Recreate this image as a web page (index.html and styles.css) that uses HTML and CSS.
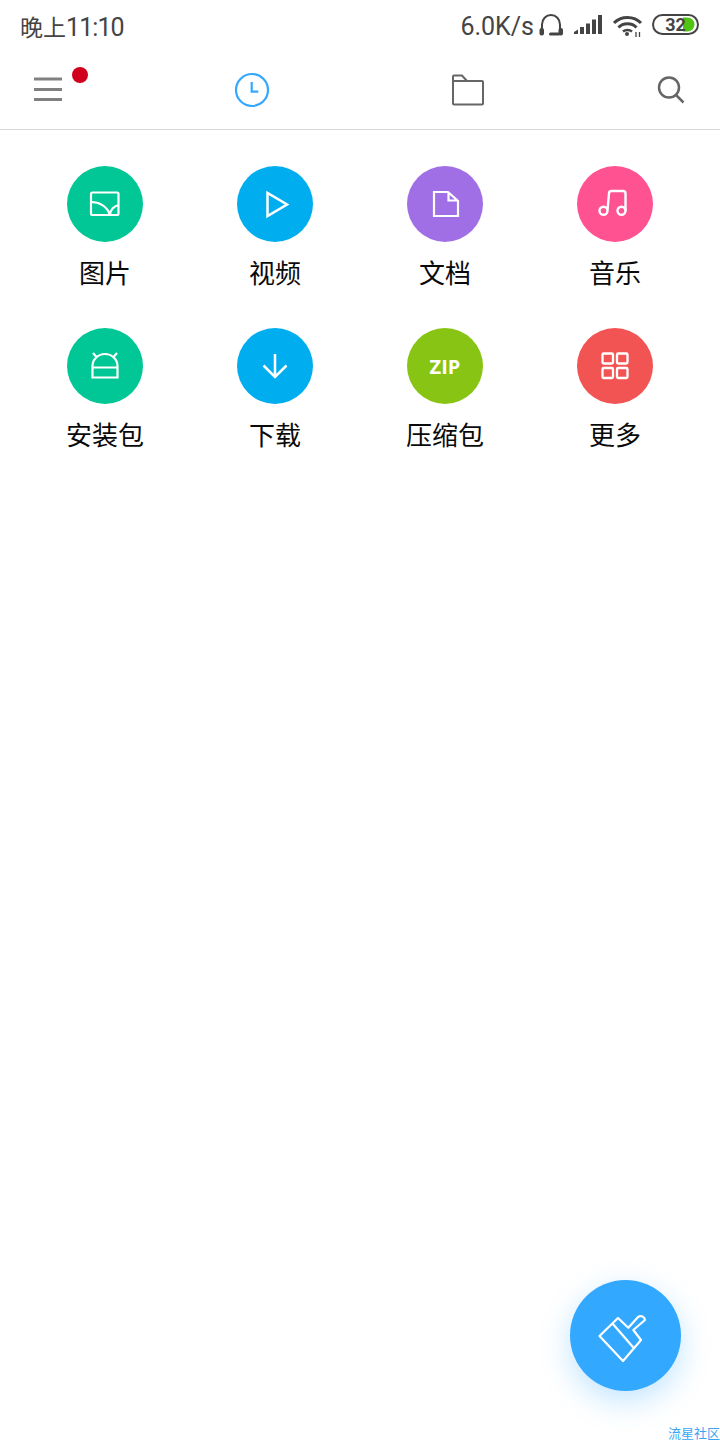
FILE: index.html
```html
<!DOCTYPE html>
<html lang="zh-CN">
<head>
    <meta charset="UTF-8">
    <meta name="viewport" content="width=device-width, initial-scale=1.0">
    <title>文件管理</title>
    <link rel="stylesheet" href="styles.css">
</head>
<body>
    <div class="status-bar">
        <span class="status-time">晚上<span class="status-digits">11:10</span></span>
        <div class="status-right">
            <span class="status-speed">6.0K/s</span>
            <svg class="status-icon" width="24" height="24" viewBox="0 0 24 24">
                <path d="M3 17V10.500a9 9.500 0 0 1 18 0V17" fill="none" stroke="#444" stroke-width="2"/>
                <rect x="0.500" y="14" width="4.500" height="7.500" rx="2" fill="#444"/>
                <rect x="19.500" y="14" width="4.500" height="7.500" rx="2" fill="#444"/>
                <rect x="10" y="18.500" width="11" height="3" rx="1.500" fill="#444"/>
            </svg>
            <svg class="status-icon" width="28" height="24" viewBox="0 0 28 24" fill="#444">
                <path d="M0 18L4 15.500V20H0Z"/>
                <rect x="6" y="13" width="4" height="7"/>
                <rect x="12" y="9.500" width="4" height="10.500"/>
                <rect x="18" y="5.500" width="4" height="14.500"/>
                <rect x="24" y="1" width="4" height="19"/>
            </svg>
            <svg class="status-icon status-wifi" width="30" height="24" viewBox="0 0 30 24" fill="none" stroke="#444">
                <path d="M1 9C8 1.500 21 1.500 28 9" stroke-width="3"/>
                <path d="M5.500 13.500C10 8.500 19 8.500 23.500 13.500" stroke-width="3"/>
                <path d="M10 17.500C12.500 15.500 16.500 15.500 19 17.500" stroke-width="2.500"/>
                <circle cx="14" cy="20" r="2" fill="#444" stroke="none"/>
                <path d="M23 18V23M26.500 18V23" stroke-width="1.300"/>
            </svg>
            <svg class="status-icon" width="47" height="24" viewBox="0 0 47 24">
                <rect x="1" y="1" width="45" height="19" rx="9.500" fill="#fff" stroke="#444" stroke-width="2"/>
                <path d="M31 3.500H35.500a7 7 0 0 1 0 14H31Z" fill="#4fc412"/>
                <text class="battery-text" x="23.500" y="17" text-anchor="middle">32</text>
            </svg>
        </div>
    </div>

    <nav class="toolbar">
        <div class="tool tool-menu">
            <svg width="40" height="40" viewBox="0 0 40 40" stroke="#808080" stroke-width="3">
                <path d="M6 9H34M6 19.500H34M6 29.500H34"/>
            </svg>
            <span class="red-dot"></span>
        </div>
        <div class="tool">
            <svg width="40" height="40" viewBox="0 0 40 40" fill="none" stroke="#33a8ff" stroke-width="2.200">
                <circle cx="20" cy="20" r="16"/>
                <path d="M19.700 12V21.700H26.300"/>
            </svg>
        </div>
        <div class="tool">
            <svg width="40" height="40" viewBox="0 0 40 40" fill="none" stroke="#666" stroke-width="2">
                <path d="M5 33.500V6.500a1 1 0 0 1 1-1H14L19 11H34a1 1 0 0 1 1 1V33.500a1 1 0 0 1-1 1H6a1 1 0 0 1-1-1ZM5 11H19"/>
            </svg>
        </div>
        <div class="tool">
            <svg width="40" height="40" viewBox="0 0 40 40" fill="none" stroke="#666" stroke-width="2.500">
                <circle cx="19" cy="17.500" r="10"/>
                <path d="M26 25L33.500 32.500"/>
            </svg>
        </div>
    </nav>

    <main class="category-grid">
        <div class="category">
            <div class="circle green">
                <svg width="76" height="76" viewBox="0 0 76 76" fill="none" stroke="#fff" stroke-width="2.200">
                    <rect x="24" y="26.500" width="27.500" height="22.500" rx="1.500"/>
                    <path d="M24 36C32 36 40 40 43 49C43 44 47 40 51.500 39"/>
                </svg>
            </div>
            <span class="category-name">图片</span>
        </div>
        <div class="category">
            <div class="circle blue">
                <svg width="76" height="76" viewBox="0 0 76 76" fill="none" stroke="#fff" stroke-width="2.500">
                    <path d="M30.500 27V50L50 38.500Z"/>
                </svg>
            </div>
            <span class="category-name">视频</span>
        </div>
        <div class="category">
            <div class="circle purple">
                <svg width="76" height="76" viewBox="0 0 76 76" fill="none" stroke="#fff" stroke-width="2.200">
                    <path d="M27 26H41L51 35V50H27ZM41.500 26V34.500H51"/>
                </svg>
            </div>
            <span class="category-name">文档</span>
        </div>
        <div class="category">
            <div class="circle pink">
                <svg width="76" height="76" viewBox="0 0 76 76" fill="none" stroke="#fff" stroke-width="2.400">
                    <circle cx="26.500" cy="44.700" r="4"/>
                    <circle cx="44.500" cy="44.700" r="4"/>
                    <path d="M30.500 44L32 27.500a2.500 2.500 0 0 1 2.500-2.500H46a2.500 2.500 0 0 1 2.500 2.500V44.700"/>
                </svg>
            </div>
            <span class="category-name">音乐</span>
        </div>
        <div class="category">
            <div class="circle green">
                <svg width="76" height="76" viewBox="0 0 76 76" fill="none" stroke="#fff" stroke-width="2.200">
                    <path d="M25.500 49.500V38a12.500 12 0 0 1 25 0V49.500ZM25.500 39.500H50.500M26 25L29.500 29M50 25L46.500 29"/>
                </svg>
            </div>
            <span class="category-name">安装包</span>
        </div>
        <div class="category">
            <div class="circle blue">
                <svg width="76" height="76" viewBox="0 0 76 76" fill="none" stroke="#fff" stroke-width="2.500">
                    <path d="M38 26V49M26.500 37.500L38 49L49.500 37.500"/>
                </svg>
            </div>
            <span class="category-name">下载</span>
        </div>
        <div class="category">
            <div class="circle lime">
                <span class="zip-text">ZIP</span>
            </div>
            <span class="category-name">压缩包</span>
        </div>
        <div class="category">
            <div class="circle red">
                <svg width="76" height="76" viewBox="0 0 76 76" fill="none" stroke="#fff" stroke-width="2.300">
                    <rect x="25.500" y="25.500" width="10.500" height="10" rx="1.200"/>
                    <rect x="40" y="25.500" width="10.500" height="10" rx="1.200"/>
                    <rect x="25.500" y="40" width="10.500" height="10" rx="1.200"/>
                    <rect x="40" y="40" width="10.500" height="10" rx="1.200"/>
                </svg>
            </div>
            <span class="category-name">更多</span>
        </div>
    </main>

    <button class="clean-btn" type="button">
        <svg width="111" height="111" viewBox="0 0 111 111" fill="none" stroke="#fff" stroke-width="2.200" stroke-linejoin="round">
            <path d="M29.500 56L48 38L58.300 47.700L68.300 36.700a4.500 4.500 0 0 1 6.700 3.300L63.300 50L71 60L53 81Z"/>
            <path d="M42.500 43.500L63.300 67.500"/>
        </svg>
    </button>
    <span class="watermark">流星社区</span>
</body>
</html>
```

FILE: styles.css
```css
body {
    margin: 0;
    width: 720px;
    height: 1440px;
    position: relative;
    overflow: hidden;
    background-color: #fff;
    font-family: "Noto Sans CJK SC", sans-serif;
}

.status-bar {
    height: 54px;
    display: flex;
    justify-content: space-between;
    padding: 0 21px 0 20px;
    color: #444;
}

.status-time {
    font-size: 23px;
    line-height: 52px;
}

.status-digits {
    font-family: Roboto, sans-serif;
    font-size: 25px;
    letter-spacing: -0.9px;
}

.status-right {
    display: flex;
    gap: 11px;
    padding-top: 14px;
}

.status-speed {
    font-family: Roboto, sans-serif;
    font-size: 25px;
    line-height: 26px;
    margin-right: -6px;
}

.status-icon {
    display: block;
}

.status-wifi {
    margin-right: -2px;
}

.battery-text {
    font-family: Roboto, sans-serif;
    font-size: 18px;
    font-weight: 700;
    fill: #444;
}

.toolbar {
    height: 75px;
    display: grid;
    grid-template-columns: 204px 216px 202px 50px;
    padding: 0 0 0 28px;
    border-bottom: 1px solid #d8d8d8;
    align-items: start;
}

.tool {
    position: relative;
    width: 40px;
    height: 40px;
    margin-top: 16px;
}

.tool svg {
    display: block;
}

.red-dot {
    position: absolute;
    top: -3px;
    left: 44px;
    width: 16px;
    height: 16px;
    border-radius: 50%;
    background-color: #d0021b;
}

.category-grid {
    display: grid;
    grid-template-columns: repeat(4, 170px);
    row-gap: 39px;
    padding: 36px 20px 0;
}

.category {
    display: flex;
    flex-direction: column;
    align-items: center;
}

.circle {
    width: 76px;
    height: 76px;
    border-radius: 50%;
    display: flex;
    align-items: center;
    justify-content: center;
}

.circle.green { background-color: #00c795; }
.circle.blue { background-color: #00aeef; }
.circle.purple { background-color: #a06fe6; }
.circle.pink { background-color: #ff5291; }
.circle.lime { background-color: #88c414; }
.circle.red { background-color: #f25454; }

.zip-text {
    font-family: "Open Sans", sans-serif;
    color: #fff;
    font-size: 20px;
    font-weight: 700;
}

.category-name {
    margin-top: 13px;
    font-size: 26px;
    line-height: 34px;
    color: #0a0a0a;
}

.clean-btn {
    position: absolute;
    left: 570px;
    top: 1280px;
    width: 111px;
    height: 111px;
    padding: 0;
    border: none;
    border-radius: 50%;
    background-color: #33a8ff;
    box-shadow: 0 10px 30px rgba(51, 168, 255, 0.3);
}

.clean-btn svg {
    display: block;
}

.watermark {
    position: absolute;
    right: 0;
    bottom: 0;
    font-size: 13px;
    line-height: 14px;
    color: #3aa5f5;
}
```
